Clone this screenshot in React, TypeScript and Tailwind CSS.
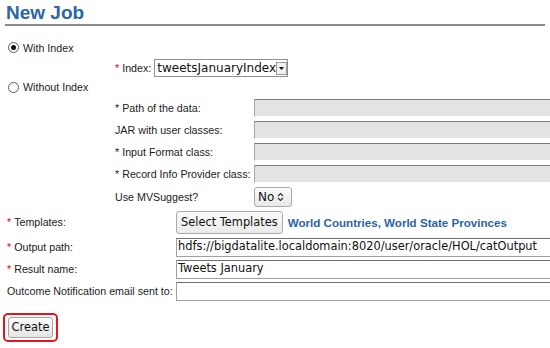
import React from 'react';

const Req: React.FC<{ red?: boolean }> = ({ red }) => (
  <span className={red ? 'text-[#e3001b] mr-[3px]' : 'text-[#222] mr-[3px]'}>*</span>
);

const Radio: React.FC<{ checked?: boolean; label: string }> = ({ checked, label }) => (
  <div className="flex items-center pl-[8px]">
    <span className="shrink-0 w-[11px] h-[11px] rounded-full border border-[#5a5a5a] bg-white flex items-center justify-center">
      {checked && <span className="w-[5px] h-[5px] rounded-full bg-[#111]" />}
    </span>
    <span className="ml-[4px]">{label}</span>
  </div>
);

const DisabledInput = () => (
  <div className="shrink-0 w-[320px] h-[18px] bg-[#e3e3e3] border border-[#a8a8a8] border-t-[#7b7b7b] border-b-white" />
);

const TextInput: React.FC<{ value?: string }> = ({ value }) => (
  <div className="shrink-0 w-[400px] h-[19px] bg-white border border-[#a0a0a0] border-t-[#707070] flex items-center pl-[1px] font-['DejaVu_Sans',sans-serif] text-[11.4px] text-[#111] whitespace-nowrap">
    {value}
  </div>
);

const upperRows: { label: string; req?: boolean }[] = [
  { label: 'Path of the data:', req: true },
  { label: 'JAR with user classes:' },
  { label: 'Input Format class:', req: true },
  { label: 'Record Info Provider class:', req: true },
];

const lowerRows: { label: string; req?: boolean; value?: string }[] = [
  { label: 'Output path:', req: true, value: 'hdfs://bigdatalite.localdomain:8020/user/oracle/HOL/catOutput' },
  { label: 'Result name:', req: true, value: 'Tweets January' },
  { label: 'Outcome Notification email sent to:' },
];

export default function App() {
  return (
    <div className="w-[550px] h-[348px] overflow-hidden bg-white font-['Liberation_Sans',Arial,sans-serif] text-[10.7px] text-[#222]">
      <h1 className="mx-[5px] h-[26px] pt-[2px] pl-[1px] border-b-2 border-[#8a8a8a] text-[19px] leading-[22px] font-bold text-[#2c66a4]">
        New Job
      </h1>

      <div className="mt-[12px] h-[20px] flex items-center">
        <Radio checked label="With Index" />
      </div>

      <div className="h-[20px] flex items-center pl-[115px]">
        <span className="shrink-0"><Req red />Index:</span>
        <div className="shrink-0 ml-[3px] w-[134px] h-[18px] border border-[#8f8f8f] bg-white flex items-center justify-between pl-[2px] pr-[1px] font-['DejaVu_Sans',sans-serif] text-[12px] text-[#111]">
          <span className="whitespace-nowrap">tweetsJanuaryIndex</span>
          <span className="shrink-0 w-[11px] h-[13px] border border-[#9a9a9a] bg-[#f2f2f2] flex items-center justify-center">
            <svg width="5" height="3" viewBox="0 0 5 3"><path d="M0 0h5L2.5 3z" fill="#111" /></svg>
          </span>
        </div>
      </div>

      <div className="h-[19px] flex items-center">
        <Radio label="Without Index" />
      </div>

      {upperRows.map((r) => (
        <div key={r.label} className="h-[22px] flex items-center pl-[115px]">
          <span className="shrink-0 w-[139px] whitespace-nowrap">
            {r.req && <Req />}
            {r.label}
          </span>
          <DisabledInput />
        </div>
      ))}

      <div className="h-[24px] flex items-center pl-[115px]">
        <span className="shrink-0 w-[139px]">Use MVSuggest?</span>
        <div className="shrink-0 w-[38px] h-[20px] rounded-[3px] border border-[#ababab] bg-gradient-to-b from-[#fafafa] to-[#e9e9e9] flex items-center pl-[3px] gap-[3px] font-['DejaVu_Sans',sans-serif] text-[12px] text-[#111]">
          <span>No</span>
          <svg width="7" height="10" viewBox="0 0 7 10" fill="none" stroke="#333" strokeWidth="1.2">
            <path d="M1 4l2.5-2.5L6 4" />
            <path d="M1 6l2.5 2.5L6 6" />
          </svg>
        </div>
      </div>

      <div className="h-[27px] flex items-center pl-[7px]">
        <span className="shrink-0 w-[169px]"><Req red />Templates:</span>
        <button className="shrink-0 h-[23px] px-[4px] rounded-[3px] border border-[#ababab] bg-gradient-to-b from-[#fbfbfb] to-[#eaeaea] font-['DejaVu_Sans',sans-serif] text-[11.4px] text-[#111]">
          Select Templates
        </button>
        <span className="shrink-0 whitespace-nowrap ml-[5px] font-bold text-[#2b64a3] text-[11.6px]">World Countries, World State Provinces</span>
      </div>

      {lowerRows.map((r) => (
        <div key={r.label} className="h-[22px] flex items-center pl-[7px]">
          <span className="shrink-0 w-[169px] whitespace-nowrap">
            {r.req && <Req red />}
            {r.label}
          </span>
          <TextInput value={r.value} />
        </div>
      ))}

      <div className="mt-[11px] ml-[3px] inline-flex px-[3px] py-[2px] border-2 border-[#e8141c] rounded-[5px]">
        <button className="w-[45px] h-[21px] rounded-[3px] border border-[#a5a5a5] bg-gradient-to-b from-[#fbfbfb] to-[#e6e6e6] font-['DejaVu_Sans',sans-serif] text-[11.4px] text-[#111]">
          Create
        </button>
      </div>
    </div>
  );
}
